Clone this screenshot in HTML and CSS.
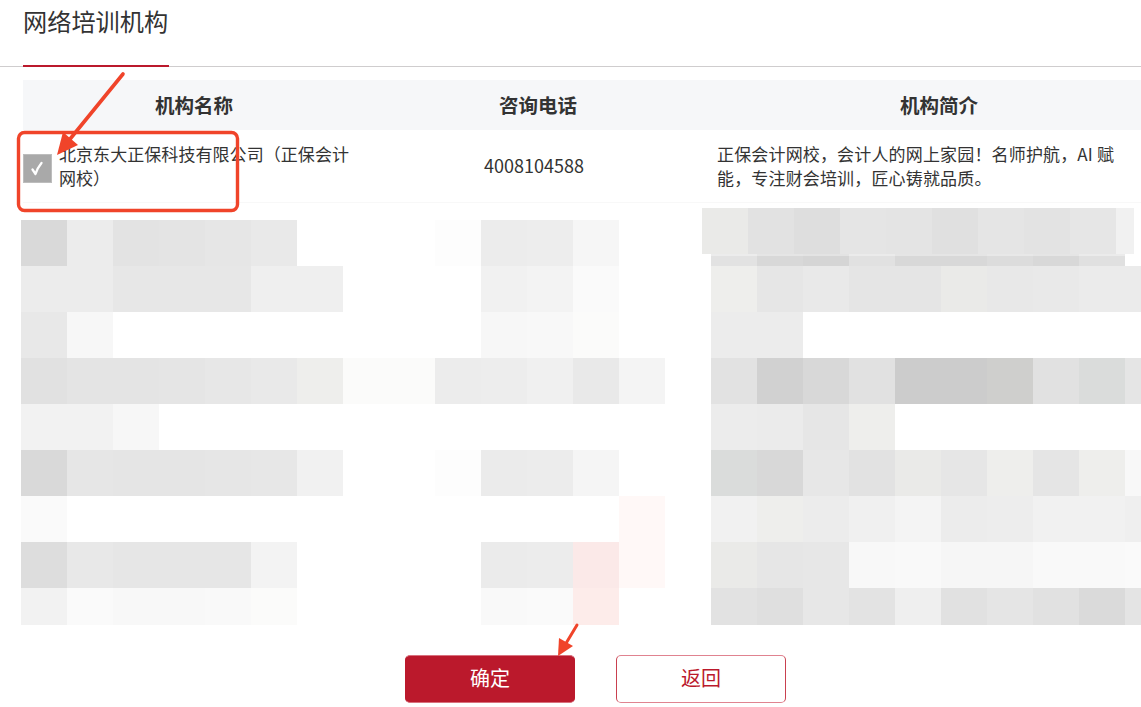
FILE: index.html
```html
<!DOCTYPE html>
<html lang="zh-CN">
<head>
<meta charset="utf-8">
<title>网络培训机构</title>
<link rel="stylesheet" href="styles.css">
</head>
<body>
<main class="page">
  <div class="tabs"><h1 class="tab">网络培训机构</h1></div>

  <section class="table">
    <div class="thead">
      <div class="th">机构名称</div>
      <div class="th">咨询电话</div>
      <div class="th th-intro">机构简介</div>
    </div>
    <div class="row">
      <label class="name">
        <span class="check"><svg viewBox="0 0 29 29" width="29" height="29"><path d="M9.5 15.5l3 4.5c1.5-4.5 3.5-8 6-11" fill="none" stroke="#fff" stroke-width="2.3" stroke-linecap="round" stroke-linejoin="round"/></svg></span>
        <span class="name-text">北京东大正保科技有限公司（正保会计网校）</span>
      </label>
      <div class="phone">4008104588</div>
      <div class="intro">正保会计网校，会计人的网上家园！名师护航，AI 赋能，专注财会培训，匠心铸就品质。</div>
    </div>
  </section>

  <div class="mosaic">
    <div class="patch">
      <i class="c-ea"></i><i class="c-e2"></i><i class="c-de"></i><i class="c-e5"></i><i class="c-e4"></i><i class="c-e0"></i><i class="c-e5"></i><i class="c-e3"></i><i class="c-e6"></i><i class="c-f1"></i>
    </div>
    <div class="m-row">
      <i class="c-d9"></i><i class="c-ec"></i><i class="c-e3"></i><i class="c-e4"></i><i class="c-e6"></i><i class="c-e9"></i><i></i><i></i><i></i><i class="c-fd"></i><i class="c-ec"></i><i class="c-ed"></i><i class="c-f6"></i><i></i><i></i>
      <i class="c-e2"></i><i class="c-d8"></i><i class="c-d5"></i><i class="c-e1"></i><i class="c-d8"></i><i class="c-d8"></i><i class="c-dc"></i><i class="c-d8"></i><i class="c-e0"></i><i></i>
    </div>
    <div class="m-row">
      <i class="c-ec"></i><i class="c-ec"></i><i class="c-e7"></i><i class="c-e7"></i><i class="c-e7"></i><i class="c-ef"></i><i class="c-ef"></i><i></i><i></i><i></i><i class="c-f1"></i><i class="c-f3"></i><i class="c-fa"></i><i></i><i></i>
      <i class="c-ee"></i><i class="c-e6"></i><i class="c-e9"></i><i class="c-e5"></i><i class="c-e5"></i><i class="c-ea"></i><i class="c-e8"></i><i class="c-e9"></i><i class="c-eb"></i><i class="c-eb"></i>
    </div>
    <div class="m-row">
      <i class="c-e8"></i><i class="c-f7"></i><i></i><i></i><i></i><i></i><i></i><i></i><i></i><i></i><i class="c-f7"></i><i class="c-f8"></i><i class="c-fb"></i><i></i><i></i>
      <i class="c-ec"></i><i class="c-ec"></i><i></i><i></i><i></i><i></i><i></i><i></i><i></i><i></i>
    </div>
    <div class="m-row">
      <i class="c-e1"></i><i class="c-e4"></i><i class="c-e4"></i><i class="c-e5"></i><i class="c-e7"></i><i class="c-e9"></i><i class="c-ee"></i><i class="c-fb"></i><i class="c-fb"></i><i class="c-ec"></i><i class="c-ed"></i><i class="c-f0"></i><i class="c-e9"></i><i class="c-f4"></i><i></i>
      <i class="c-e2"></i><i class="c-d1"></i><i class="c-d8"></i><i class="c-e1"></i><i class="c-cc"></i><i class="c-cc"></i><i class="c-cf"></i><i class="c-e1"></i><i class="c-db"></i><i class="c-e5"></i>
    </div>
    <div class="m-row">
      <i class="c-f2"></i><i class="c-f2"></i><i class="c-f7"></i><i></i><i></i><i></i><i></i><i></i><i></i><i></i><i></i><i></i><i></i><i></i><i></i>
      <i class="c-ec"></i><i class="c-eb"></i><i class="c-e6"></i><i class="c-ee"></i><i></i><i></i><i></i><i></i><i></i><i></i>
    </div>
    <div class="m-row">
      <i class="c-d9"></i><i class="c-e6"></i><i class="c-e5"></i><i class="c-e5"></i><i class="c-e6"></i><i class="c-e7"></i><i class="c-f1"></i><i></i><i></i><i class="c-fd"></i><i class="c-eb"></i><i class="c-ec"></i><i class="c-f5"></i><i></i><i></i>
      <i class="c-db"></i><i class="c-d8"></i><i class="c-e7"></i><i class="c-e2"></i><i class="c-ea"></i><i class="c-e6"></i><i class="c-ee"></i><i class="c-e5"></i><i class="c-ee"></i><i class="c-f8"></i>
    </div>
    <div class="m-row">
      <i class="c-fa"></i><i></i><i></i><i></i><i></i><i></i><i></i><i></i><i></i><i></i><i></i><i></i><i></i><i class="c-p1"></i><i></i>
      <i class="c-f1"></i><i class="c-ee"></i><i class="c-ec"></i><i class="c-f0"></i><i class="c-f4"></i><i class="c-ec"></i><i class="c-ed"></i><i class="c-f1"></i><i class="c-f1"></i><i class="c-ef"></i>
    </div>
    <div class="m-row">
      <i class="c-dd"></i><i class="c-e8"></i><i class="c-e6"></i><i class="c-e6"></i><i class="c-e6"></i><i class="c-f3"></i><i></i><i></i><i></i><i></i><i class="c-eb"></i><i class="c-ec"></i><i class="c-p2"></i><i class="c-p1"></i><i></i>
      <i class="c-ea"></i><i class="c-e6"></i><i class="c-e7"></i><i class="c-f8"></i><i class="c-f9"></i><i class="c-f6"></i><i class="c-f6"></i><i class="c-f9"></i><i class="c-f9"></i><i class="c-fa"></i>
    </div>
    <div class="m-row m-last">
      <i class="c-f2"></i><i class="c-fa"></i><i class="c-f8"></i><i class="c-f8"></i><i class="c-f9"></i><i class="c-fb"></i><i></i><i></i><i></i><i></i><i class="c-f9"></i><i class="c-fa"></i><i class="c-p3"></i><i></i><i></i>
      <i class="c-e2"></i><i class="c-df"></i><i class="c-e7"></i><i class="c-e3"></i><i class="c-ef"></i><i class="c-e1"></i><i class="c-e5"></i><i class="c-e1"></i><i class="c-da"></i><i class="c-e4"></i>
    </div>
  </div>

  <div class="actions">
    <button class="btn btn-primary" type="button">确定</button>
    <button class="btn btn-ghost" type="button">返回</button>
  </div>

  <svg class="marks" width="1141" height="707" viewBox="0 0 1141 707" aria-hidden="true">
    <rect x="18.5" y="132.5" width="219" height="78" rx="6" fill="none" stroke="#f0442a" stroke-width="3.4"/>
    <path d="M123 74L66 144" fill="none" stroke="#f0442a" stroke-width="3.6" stroke-linecap="round"/>
    <path d="M57 155L63 132L78 145Z" fill="#f0442a"/>
    <path d="M577 625L565 645" fill="none" stroke="#f0442a" stroke-width="3" stroke-linecap="round"/>
    <path d="M558 656L559 638L573 646Z" fill="#f0442a"/>
  </svg>
</main>
</body>
</html>
```
FILE: styles.css
```css
* { box-sizing: border-box; }
html, body { margin: 0; padding: 0; background: #fff; }
body {
  width: 1141px;
  height: 707px;
  overflow: hidden;
  font-family: "Noto Sans CJK SC", "Noto Sans", sans-serif;
  color: #333;
}
.page { position: relative; width: 1141px; height: 707px; overflow: hidden; }

.tabs {
  height: 67px;
  padding-left: 23px;
  border-bottom: 1px solid #cfcdce;
}
.tab {
  width: 146px;
  height: 67px;
  margin: 0;
  border-bottom: 2px solid #bb192c;
  font-size: 24.2px;
  font-weight: 400;
  line-height: 41px;
  white-space: nowrap;
}

.table { margin: 13px 0 0 23px; }
.thead, .row { display: grid; grid-template-columns: 342px 346px 430px; }
.thead { height: 50px; background: #f6f7f9; }
.th {
  text-align: center;
  font-size: 19.5px;
  font-weight: 700;
  line-height: 50px;
}
.th-intro { padding-left: 26px; }
.row {
  height: 73px;
  border-bottom: 1px solid #f8f8f8;
  font-size: 17px;
  line-height: 24px;
}
.name { display: flex; gap: 7px; padding-top: 12px; letter-spacing: .06px; }
.check {
  flex: none;
  width: 29px;
  height: 29px;
  margin-top: 12px;
  background: #a9a9a9;
  box-shadow: inset 0 0 0 1px #bdbdbd;
}
.check svg { display: block; }
.name-text { width: 295px; }
.phone { padding-right: 8px; text-align: center; line-height: 70px; font-size: 18px; }
.intro { padding: 12px 18px 0 6px; letter-spacing: .16px; }

.mosaic { position: relative; margin: 17px 0 0 21px; width: 1120px; overflow: visible; }
.m-row { display: grid; grid-template-columns: repeat(25, 46px); height: 46px; overflow: hidden; }
.m-last { height: 37px; }
.patch {
  position: absolute;
  left: 681px;
  top: -12px;
  display: grid;
  grid-template-columns: repeat(9, 46px) 18px;
  height: 46px;
  box-shadow: 0 2px 0 rgba(255, 255, 255, .35);
}
.m-row i, .patch i { display: block; }

.c-cc { background: #ccc; } .c-cf { background: #cfcfcd; } .c-d1 { background: #d1d1d1; }
.c-d5 { background: #d5d5d5; } .c-d8 { background: #d8d8d8; } .c-d9 { background: #d9d9d9; }
.c-da { background: #dadada; } .c-db { background: #dadcdb; } .c-dc { background: #dcdcdc; }
.c-dd { background: #dddddd; } .c-de { background: #dedede; } .c-df { background: #dfdfdf; }
.c-e0 { background: #e0e0e0; } .c-e1 { background: #e1e1e1; } .c-e2 { background: #e2e2e2; }
.c-e3 { background: #e3e3e3; } .c-e4 { background: #e4e4e4; } .c-e5 { background: #e5e5e5; }
.c-e6 { background: #e6e6e6; } .c-e7 { background: #e7e7e7; } .c-e8 { background: #e8e8e8; }
.c-e9 { background: #e9e9e9; } .c-ea { background: #eaeae8; } .c-eb { background: #ebebeb; }
.c-ec { background: #ececec; } .c-ed { background: #ededed; } .c-ee { background: #eeeeec; }
.c-ef { background: #efefef; } .c-f0 { background: #f0f0f0; } .c-f1 { background: #f1f1f1; }
.c-f2 { background: #f2f2f2; } .c-f3 { background: #f3f3f3; } .c-f4 { background: #f4f4f4; }
.c-f5 { background: #f5f5f5; } .c-f6 { background: #f6f6f6; } .c-f7 { background: #f7f7f7; }
.c-f8 { background: #f8f8f8; } .c-f9 { background: #f9f9f9; } .c-fa { background: #fafafa; }
.c-fb { background: #fbfbfa; } .c-fd { background: #fdfdfd; }
.c-p1 { background: #fff8f7; } .c-p2 { background: #fbe9e8; } .c-p3 { background: #fdecea; }

.actions { display: flex; gap: 41px; margin-top: 30px; padding-left: 405px; }
.btn {
  width: 170px;
  height: 48px;
  padding: 0 0 3px;
  border-radius: 5px;
  font-family: inherit;
  font-size: 20px;
  line-height: 44px;
}
.btn-primary { border: 1px solid #bb192c; border-color: #d9717e #bb192c; background: #bb192c; color: #fff; }
.btn-ghost { border: 1px solid #c9404f; border-color: #e08390 #c9404f; background: #fff; color: #bb192c; }

.marks { position: absolute; left: 0; top: 0; pointer-events: none; }
```
